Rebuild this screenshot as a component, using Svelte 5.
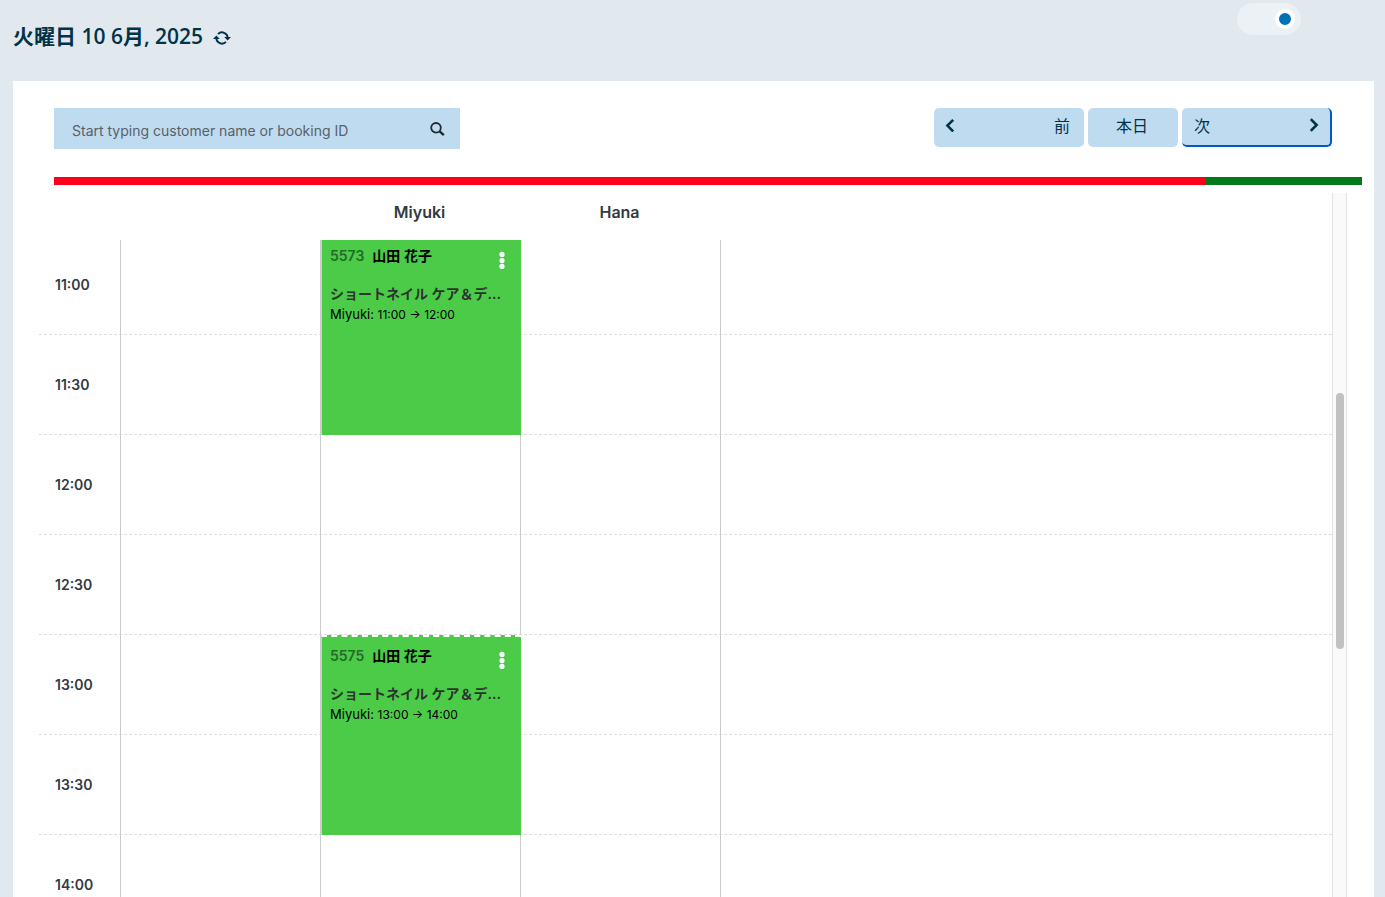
<script lang="ts">
  // Day view of the booking calendar: one column per staff member
  const ROW_HEIGHT = 100; // one half-hour slot
  const START_HOUR = 11;

  const slots = ["11:00", "11:30", "12:00", "12:30", "13:00", "13:30", "14:00"];

  const bookings = [
    {
      id: 5573,
      staff: "Miyuki",
      customer: "山田 花子",
      service: "ショートネイル ケア＆デ...",
      from: "11:00",
      to: "12:00",
    },
    {
      id: 5575,
      staff: "Miyuki",
      customer: "山田 花子",
      service: "ショートネイル ケア＆デ...",
      from: "13:00",
      to: "14:00",
    },
  ];

  const columns = ["", "Miyuki", "Hana"];
  const booked = 88;

  let search = $state("");
  let live = $state(true);

  function offset(time: string) {
    const [h, m] = time.split(":").map(Number);
    return ((h - START_HOUR) * 60 + m) * (ROW_HEIGHT / 30);
  }
</script>

<div class="page">
  <header class="topbar">
    <h1>
      火曜日 10 6月, 2025
      <button class="refresh" aria-label="Refresh">
        <svg viewBox="0 0 18 14" width="18" height="14">
          <path
            d="M3.4 7A5.6 5.6 0 0 0 13 10.9M14.6 7A5.6 5.6 0 0 0 5 3.1"
            fill="none"
            stroke="currentColor"
            stroke-width="2"
          />
          <path d="M0 8L3.4 4.4L6.8 8ZM18 6L14.6 9.6L11.2 6Z" fill="currentColor" />
        </svg>
      </button>
    </h1>
    <input class="toggle" type="checkbox" aria-label="Live" bind:checked={live} />
  </header>

  <main class="panel">
    <div class="toolbar">
      <div class="search">
        <input
          type="text"
          aria-label="Search bookings"
          placeholder="Start typing customer name or booking ID"
          bind:value={search}
        />
        <svg viewBox="0 0 16 16" width="16" height="16" aria-hidden="true">
          <circle cx="7" cy="6.8" r="4.8" fill="none" stroke="currentColor" stroke-width="1.8" />
          <path d="M10.4 10.2L14.8 14.2" stroke="currentColor" stroke-width="2.4" />
        </svg>
      </div>
      <nav class="nav">
        <button class="step">
          <svg viewBox="0 0 10 14" width="10" height="14" aria-hidden="true">
            <path d="M8.2 1.8L2.4 7.6L8.2 13.4" />
          </svg>
          前
        </button>
        <button class="today">本日</button>
        <button class="step next">
          次
          <svg viewBox="0 0 10 14" width="10" height="14" aria-hidden="true">
            <path d="M1.8 1.2L7.6 7L1.8 12.8" />
          </svg>
        </button>
      </nav>
    </div>

    <div class="capacity">
      <div class="used" style="width:{booked}%"></div>
    </div>

    <div class="schedule">
      <div class="calendar">
        <div class="staff">
          {#each columns as name}
            <div class="name">{name}</div>
          {/each}
        </div>
        <div class="viewport">
          <div class="grid">
            {#each slots as slot}
              <div class="slot">{slot}</div>
            {/each}
            <div class="columns">
              {#each columns as name}
                <div class="column">
                  {#each bookings.filter((b) => b.staff === name) as b}
                    <article
                      class="booking"
                      style="top:{offset(b.from)}px;height:{offset(b.to) - offset(b.from)}px"
                    >
                      <div class="who">
                        <span class="id">{b.id}</span>
                        <span class="customer">{b.customer}</span>
                        <button class="menu" aria-label="Booking menu">
                          <svg viewBox="0 0 6 18" width="6" height="18">
                            <circle cx="3" cy="3.4" r="2.6" />
                            <circle cx="3" cy="9.6" r="2.6" />
                            <circle cx="3" cy="15.4" r="2.6" />
                          </svg>
                        </button>
                      </div>
                      <div class="service">{b.service}</div>
                      <div class="time">{b.staff}: <small>{b.from} → {b.to}</small></div>
                    </article>
                  {/each}
                </div>
              {/each}
            </div>
          </div>
        </div>
      </div>
      <div class="track"><div class="thumb"></div></div>
    </div>
  </main>
</div>

<style>
  :global(body) {
    background: #e1e8ee;
  }
  .page {
    --ink: #003349;
    --text: #333a40;
    --soft-blue: #bfdbef;
    display: flex;
    flex-direction: column;
    height: 100vh;
    overflow: hidden;
    color: var(--text);
    font-family: Inter, "Noto Sans CJK JP", sans-serif;
    font-size: 14px;
  }
  button {
    border: none;
    background: none;
    padding: 0;
    color: inherit;
    font: inherit;
    cursor: pointer;
  }

  .topbar {
    display: flex;
    justify-content: space-between;
    align-items: flex-start;
    height: 81px;
    padding: 0 84px 0 13px;
    box-sizing: border-box;
  }
  h1 {
    display: flex;
    align-items: center;
    gap: 10px;
    margin: 20px 0 0;
    color: var(--ink);
    font-family: "Open Sans", "Noto Sans CJK JP", sans-serif;
    font-size: 21px;
    font-weight: 600;
    line-height: 32px;
  }
  .refresh {
    display: flex;
    padding-top: 4px;
  }
  .toggle {
    appearance: none;
    display: flex;
    align-items: center;
    width: 64px;
    height: 32px;
    margin: 3px 0 0;
    padding: 0 6px;
    box-sizing: border-box;
    border-radius: 16px;
    background: #ecf1f5;
    cursor: pointer;
  }
  .toggle::before {
    content: "";
    width: 12px;
    height: 12px;
    border: 4px solid #fff;
    border-radius: 50%;
    background: #8a99a5;
  }
  .toggle:checked::before {
    margin-left: auto;
    background: #0070b5;
  }

  .panel {
    display: flex;
    flex-direction: column;
    flex: 1;
    min-height: 0;
    margin: 0 11px 0 13px;
    background: #fff;
  }
  .toolbar {
    display: flex;
    justify-content: space-between;
    align-items: flex-start;
    padding: 27px 42px 28px 41px;
  }
  .search {
    display: flex;
    align-items: center;
    width: 406px;
    height: 41px;
    padding: 0 15px 0 18px;
    box-sizing: border-box;
    background: var(--soft-blue);
    color: #222a30;
  }
  .search input {
    flex: 1;
    min-width: 0;
    padding: 4px 0 0;
    border: none;
    outline: none;
    background: none;
    color: inherit;
    font: inherit;
  }
  .search input::placeholder {
    color: #596168;
  }
  .nav {
    display: flex;
    gap: 4px;
    color: var(--ink);
    font-family: "Noto Sans CJK JP", sans-serif;
    font-size: 16px;
  }
  .nav button {
    height: 39px;
    padding-bottom: 6px;
    border-radius: 5px;
    box-sizing: border-box;
    background: var(--soft-blue);
  }
  .nav svg {
    fill: none;
    stroke: currentColor;
    stroke-width: 2.6;
  }
  .nav .step {
    display: flex;
    justify-content: space-between;
    align-items: center;
    width: 150px;
    padding-left: 11px;
    padding-right: 14px;
  }
  .nav .today {
    width: 90px;
    padding-right: 2px;
  }
  .nav .next {
    padding: 0 11px 4px 12px;
    border-right: 2px solid #0059c1;
    border-bottom: 2px solid #0059c1;
  }

  .capacity {
    height: 8px;
    margin: 0 12px 8px 41px;
    background: #00781b;
  }
  .used {
    height: 100%;
    background: #ff001c;
  }

  .schedule {
    display: flex;
    flex: 1;
    min-height: 0;
    margin: 0 27px 0 26px;
  }
  .calendar {
    display: flex;
    flex-direction: column;
    flex: 1;
    min-width: 0;
  }
  .staff {
    display: flex;
    height: 47px;
    padding-left: 82px;
    flex-shrink: 0;
  }
  .name {
    width: 200px;
    padding-right: 3px;
    box-sizing: border-box;
    font-size: 16px;
    font-weight: 600;
    line-height: 38px;
    text-align: center;
  }
  .viewport {
    flex: 1;
    min-height: 0;
    overflow: hidden;
  }
  .grid {
    position: relative;
    margin-top: -5px;
  }
  .slot {
    height: 100px;
    padding-left: 16px;
    box-sizing: border-box;
    border-bottom: 1px dashed #dcdcdc;
    font-size: 14px;
    font-weight: 600;
    line-height: 100px;
  }
  .columns {
    position: absolute;
    top: 0;
    bottom: 0;
    left: 81px;
    display: flex;
    border-left: 1px solid #ccc;
  }
  .column {
    position: relative;
    width: 200px;
    box-sizing: border-box;
    border-right: 1px solid #ccc;
  }
  .booking {
    position: absolute;
    left: 0;
    right: -1px;
    padding: 8px 16px 0 8px;
    box-sizing: border-box;
    border-top: 2px dashed #fff;
    border-left: 1px solid #ccc;
    background: #4ccb49;
    color: #000;
  }
  .who {
    display: flex;
    align-items: flex-start;
    gap: 8px;
    height: 38px;
    font-weight: 600;
    line-height: 22px;
  }
  .id {
    color: #236b28;
  }
  .menu {
    display: flex;
    margin: 6px 0 0 auto;
  }
  .menu svg {
    fill: #fff;
  }
  .service {
    overflow: hidden;
    color: #2c3430;
    font-weight: 600;
    line-height: 22px;
    text-overflow: ellipsis;
    white-space: nowrap;
  }
  .time {
    font-size: 13px;
    line-height: 18px;
  }
  .time small {
    font-size: 12px;
  }

  .track {
    width: 15px;
    padding: 200px 2px 0 3px;
    box-sizing: border-box;
    border: solid #e4e4e4;
    border-width: 0 1px;
    background: #fafafa;
  }
  .thumb {
    width: 8px;
    height: 256px;
    border-radius: 4px;
    background: #c1c1c1;
  }
</style>
